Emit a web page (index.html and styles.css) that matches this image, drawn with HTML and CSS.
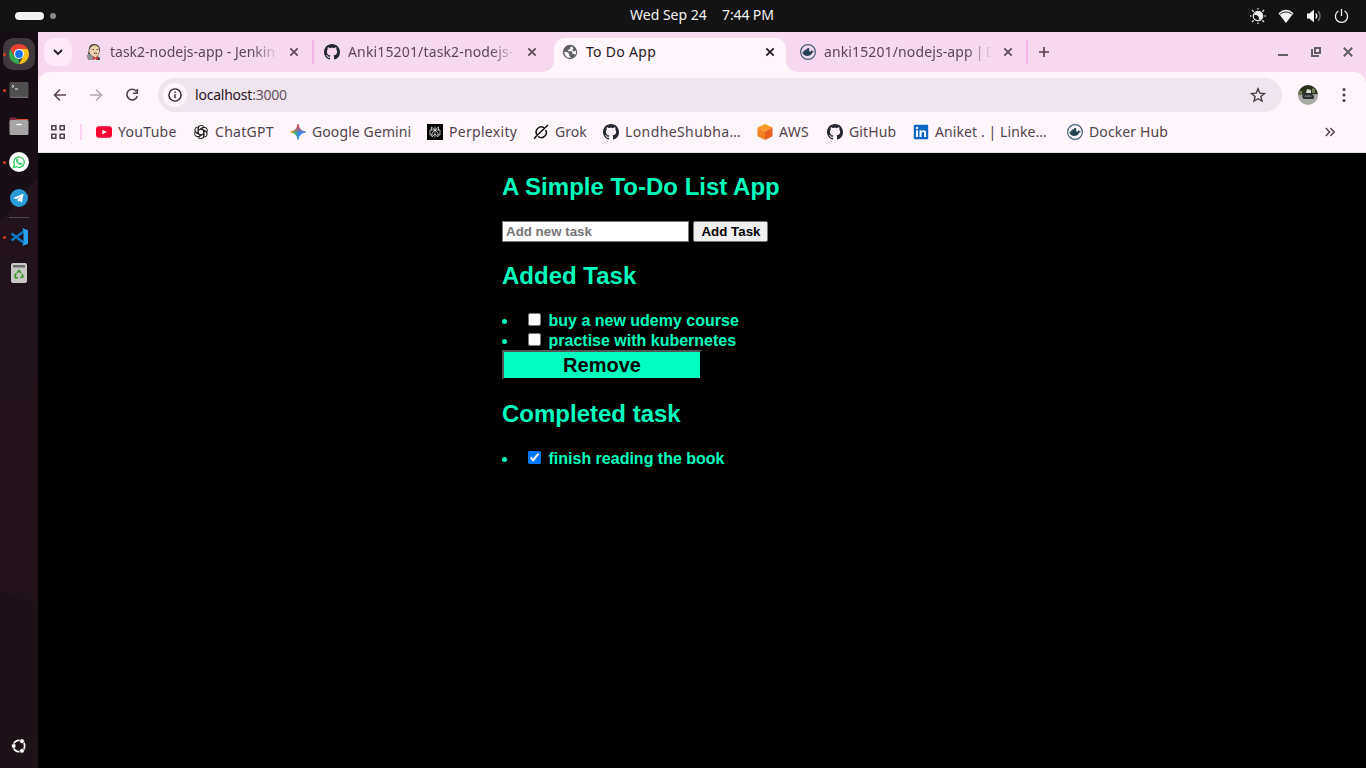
FILE: index.html
```html
<!DOCTYPE html>
<html lang="en">
<head>
<meta charset="utf-8">
<title>To Do App</title>
<link rel="stylesheet" href="styles.css">
</head>
<body>
<svg class="defs" width="0" height="0">
  <symbol id="github" viewBox="0 0 16 16"><path fill="#24292f" d="M8 0C3.58 0 0 3.58 0 8c0 3.54 2.29 6.53 5.47 7.59.4.07.55-.17.55-.38 0-.19-.01-.82-.01-1.49-2.01.37-2.53-.49-2.69-.94-.09-.23-.48-.94-.82-1.13-.28-.15-.68-.52-.01-.53.63-.01 1.08.58 1.23.82.72 1.21 1.87.87 2.33.66.07-.52.28-.87.51-1.07-1.78-.2-3.64-.89-3.64-3.95 0-.87.31-1.59.82-2.15-.08-.2-.36-1.02.08-2.12 0 0 .67-.21 2.2.82.64-.18 1.32-.27 2-.27s1.36.09 2 .27c1.53-1.04 2.2-.82 2.2-.82.44 1.1.16 1.92.08 2.12.51.56.82 1.27.82 2.15 0 3.07-1.87 3.75-3.65 3.95.29.25.54.73.54 1.48 0 1.07-.01 1.93-.01 2.2 0 .21.15.46.55.38A8.01 8.01 0 0 0 16 8c0-4.42-3.58-8-8-8z"/></symbol>
  <symbol id="docker" viewBox="0 0 16 16"><circle cx="8" cy="8" r="7.4" fill="none" stroke="#466174" stroke-width="1.2"/><path fill="#244356" d="M2.400 7.800h1.400V6.400h1.500V5.200h2V4.100h1.900v3.500h1.600c.5-.3.300-1 .8-1.500.6.3.8.800.8 1.200.6-.1 1 0 1.400.3-.3.700-.9.900-1.600 1.100-.9 2.200-2.700 3.200-5.300 3.200-2.700 0-4.300-1.300-4.500-4.100z"/></symbol>
  <symbol id="close" viewBox="0 0 10 10"><path d="M1.300 1.300l7.400 7.400M8.700 1.300l-7.400 7.400" fill="none" stroke="currentColor" stroke-width="1.700"/></symbol>
</svg>

<header class="topbar">
  <div class="workspaces"><i class="pill"></i><i class="dot"></i></div>
  <div class="clock"><span class="date">Wed Sep 24</span><span class="time">7:44 PM</span></div>
  <div class="status">
    <svg width="16" height="16" viewBox="0 0 16 16"><circle cx="8" cy="8" r="4.700" fill="none" stroke="#e8e8e8" stroke-width="1.200"/><path fill="#f2f2f2" d="M7.200 4.200A3.600 3.600 0 0 0 11.800 8.800 4.200 4.200 0 1 1 7.200 4.200z" transform="rotate(180 8 8)"/><g fill="#999"><path d="M7 0h2v1.600H7zM7 14.400h2V16H7zM0 7h1.600v2H0zM14.400 7H16v2h-1.600z"/></g><path d="M2 2l1.700 1.700M14 2l-1.700 1.700M2 14l1.700-1.700M14 14l-1.700-1.700" stroke="#ddd" stroke-width="1.300"/></svg>
    <svg width="16" height="16" viewBox="0 0 16 16"><path fill="#f5f5f5" d="M8 15L.5 5.200Q8-1.600 15.500 5.200z"/><path d="M2.200 6.100Q8 1.700 13.800 6.100" fill="none" stroke="#131313" stroke-width=".9"/></svg>
    <svg width="16" height="16" viewBox="0 0 16 16"><path fill="#f5f5f5" d="M1 5.500h2.300L8 1.500v13l-4.700-4H1z"/><path d="M9.700 5.500q2.200 2.500 0 5" fill="none" stroke="#eee" stroke-width="1.300"/><path d="M12.200 3q3.800 5 0 10" fill="none" stroke="#777" stroke-width="1.300"/></svg>
    <svg width="16" height="16" viewBox="0 0 16 16"><path d="M4.500 3A6.100 6.100 0 1 0 10.500 3M7.500 1v7" fill="none" stroke="#f2f2f2" stroke-width="1.300"/></svg>
  </div>
</header>

<div class="desktop">
<nav class="dock">
  <svg class="wall" width="38" height="736" viewBox="0 0 38 736"><path fill="#24141d" d="M0 190L38 145v427L0 560z"/></svg>
  <div class="app current running"><svg width="20" height="20" viewBox="0 0 20 20"><path fill="#34a853" d="M1.340 5l4.330 7.500L10 15v5A10 10 0 0 1 1.340 5z"/><path fill="#fbc116" d="M10 5h8.660A10 10 0 0 1 10 20l4.300-7.500z"/><path fill="#ea4335" d="M1.340 5A10 10 0 0 1 18.660 5H10l-4.330 7.500z"/><circle cx="10" cy="10" r="5" fill="#fff"/><circle cx="10" cy="10" r="3.900" fill="#1a73e8"/></svg></div>
  <div class="app running"><svg width="20" height="18" viewBox="0 0 20 18"><rect x=".5" y="1" width="19" height="16" rx="1.500" fill="#4e4e4e"/><path d="M1 16.300h18" stroke="#777"/><path d="M3 4l2 1.300L3 6.600M6 8h3" fill="none" stroke="#eee"/></svg></div>
  <div class="app"><svg width="20" height="18" viewBox="0 0 20 18"><path fill="#7d2942" d="M.5 2.500Q.5.500 2 .5h5l1.500 1.500H19v6H.5z"/><path fill="#d8542e" d="M8 2h11v1.500H7z"/><rect x=".5" y="3" width="19" height="15" rx="1.500" fill="#a6a4a4"/><path d="M7.500 7.500h5" stroke="#fff" stroke-width="1.300"/></svg></div>
  <div class="app running"><svg width="20" height="20" viewBox="0 0 20 20"><circle cx="10" cy="10" r="10" fill="#fff"/><path d="M4.500 15.500l.9-3A5.200 5.200 0 1 1 7.500 14.700z" fill="none" stroke="#2fca5d" stroke-width="1.300"/><path fill="#2fca5d" d="M7.600 6.800l.9-.1.800 1.800-.6.900q.7 1.400 2 1.900l.9-.8 1.700.9q-.2 1.500-1.800 1.500-3.700-.8-4.500-4.200-.1-1.200.6-1.900z"/></svg></div>
  <div class="app"><svg width="18" height="18" viewBox="0 0 18 18"><circle cx="9" cy="9" r="9" fill="#2a9bd6"/><path fill="#fff" d="M3.200 9L13.500 4.800 12 13.500 9.300 11.700 7.800 13 7.500 10.500 11.500 7 6.500 10z"/></svg></div>
  <hr class="rule">
  <div class="app running"><svg width="18" height="18" viewBox="0 0 18 18"><path d="M13.500 3.500L1.500 12.500M1.500 5.500l12 9" fill="none" stroke="#1377bd" stroke-width="2.600"/><path fill="#27a0ed" d="M12.500 0L18 2.300v13.400L12.500 18l1-4V4z"/></svg></div>
  <div class="app"><svg width="16" height="20" viewBox="0 0 16 20"><rect width="16" height="20" rx="2" fill="#c8c8c6"/><path fill="#6e6e6d" d="M2 2h12v2.500H2z"/><path d="M6 10l2-2.500 2 2.500M11 11l1 2.500-2.500 1.300M7 15H4.500L4 12.500l1.300-2" fill="none" stroke="#3b9a27" stroke-width="1.700"/></svg></div>
  <div class="launcher"><svg width="16" height="16" viewBox="0 0 16 16"><circle cx="8" cy="8" r="5.700" fill="none" stroke="#fff" stroke-width="1.800"/><g fill="#fff" stroke="#201419" stroke-width=".7"><circle cx="2.700" cy="8" r="2.400"/><circle cx="11" cy="3.200" r="2.400"/><circle cx="11" cy="12.800" r="2.400"/></g></svg></div>
</nav>

<main class="browser">
  <div class="tabs">
    <div class="search"><svg width="10" height="10" viewBox="0 0 10 10"><path d="M1 3l4 4 4-4" fill="none" stroke="#28171f" stroke-width="1.800"/></svg></div>
    <div class="tab t1">
      <svg class="fav" width="16" height="16" viewBox="0 0 16 16"><path fill="#4b3f39" d="M3 4.500Q3 0 8.500 0 14 .5 14 6l-1 4.500L11 13H5L2 10z"/><path fill="#edd0ae" d="M4.500 3.500Q8-.5 12.500 3l.7 4-.9 4-2.800 2.500L6 12 4 9.500 3 7z"/><path fill="#8b9398" d="M.5 11.500L3 9.500l4 3.500 1 3H2z"/><path fill="#343a42" d="M11 12.500l2.500.5.500 3h-4z"/><path fill="#d33833" d="M7 12.500l2.500 1 2.500-1V16L9.500 15 7 16z"/><path d="M6.500 5.500H8M10.500 5.500H12M8 9.500q1.500-1 3 0" stroke="#433" stroke-width=".9" fill="none"/></svg>
      <span class="title fade">task2-nodejs-app - Jenkin</span><svg class="x" width="10" height="10"><use href="#close"/></svg>
    </div>
    <div class="tab t2"><svg class="fav" width="16" height="16"><use href="#github"/></svg><span class="title fade wide">Anki15201/task2-nodejs-</span><svg class="x" width="10" height="10"><use href="#close"/></svg></div>
    <div class="tab active"><svg class="fav" width="16" height="16" viewBox="0 0 16 16"><circle cx="8" cy="8" r="7.200" fill="#5f6368"/><path fill="#fff6fb" d="M9.500 2.400L8.200 3.500v1.300L6 5.900v1.400h3.500l1 1v1.800h1.800l1 .8q1.200-2.300.4-4.400L12 7.500 10.200 6.300 11.600 4zM2.200 7.700l3.400.6 1.600 1.600v1.700L9 13.700Q3 14.700 2.200 7.700z"/></svg><span class="title c">To Do App</span><svg class="x" width="10" height="10"><use href="#close"/></svg></div>
    <div class="tab t4"><svg class="fav" width="16" height="16"><use href="#docker"/></svg><span class="title fade tail">anki15201/nodejs-app<span class="suffix"> | D</span></span><svg class="x" width="10" height="10"><use href="#close"/></svg></div>
    <svg class="plus" width="12" height="12" viewBox="0 0 12 12"><path d="M6 1v10M1 6h10" stroke="#51404c" stroke-width="1.600"/></svg>
    <div class="window">
      <svg width="10" height="10" viewBox="0 0 10 10"><path d="M0 7h10v2H0z" fill="#625f65"/></svg>
      <svg width="10" height="10" viewBox="0 0 10 10"><path d="M4 1h5v5H4zM1 2v7h7" fill="none" stroke="#625f65" stroke-width="2"/></svg>
      <svg width="10" height="10" viewBox="0 0 10 10"><path d="M.8.8l8.400 8.400M9.200.8L.8 9.200" stroke="#625f65" stroke-width="2"/></svg>
    </div>
  </div>

  <div class="chrome">
    <div class="toolbar">
      <svg width="16" height="16" viewBox="0 0 16 16"><path d="M14 8H3M8 2.500L2.500 8 8 13.500" fill="none" stroke="#55404f" stroke-width="1.500"/></svg>
      <svg width="16" height="16" viewBox="0 0 16 16"><path d="M2 8h11M8 2.500L13.500 8 8 13.500" fill="none" stroke="#b5a8b0" stroke-width="1.500"/></svg>
      <svg width="16" height="16" viewBox="0 0 16 16"><path d="M12.500 4.500A5.300 5.300 0 1 0 13.300 9M13.300 2v4.200H9" fill="none" stroke="#55404f" stroke-width="1.600"/></svg>
      <div class="omnibox">
        <span class="info"><svg width="14" height="14" viewBox="0 0 14 14"><circle cx="7" cy="7" r="6.100" fill="none" stroke="#2b2228" stroke-width="1.400"/><path d="M7 6.200v4M7 3.500v1.400" stroke="#2b2228" stroke-width="1.400"/></svg></span>
        <span class="url">localhost<span class="port">:3000</span></span>
        <svg class="star" width="16" height="16" viewBox="0 0 16 16"><path d="M8 1.800l1.800 4.300 4.700.4-3.600 3 1.100 4.600L8 11.700 4 14.100l1.100-4.600-3.600-3 4.700-.4z" fill="none" stroke="#493d47" stroke-width="1.400"/></svg>
      </div>
      <svg class="avatar" width="20" height="20" viewBox="0 0 20 20"><defs><clipPath id="round"><circle cx="10" cy="10" r="10"/></clipPath></defs><g clip-path="url(#round)"><path fill="#29331c" d="M0 0h20v10H0z"/><path fill="#a9aba5" d="M0 10l20-1v11H0z"/><path fill="#6d7a58" d="M0 5l4 1v4H0zM14 3l3 1v4h-3z"/><path fill="#d9ddd0" d="M9 4l4 1v3H8z"/><path fill="#2a2c2f" d="M4 11l3-3h6l3 3-.5 3h-10z"/><path fill="#85898b" d="M6.500 10.500h7v1.200h-7z"/></g></svg>
      <svg class="menu" width="4" height="16" viewBox="0 0 4 16"><g fill="#55404f"><circle cx="2" cy="2.500" r="1.600"/><circle cx="2" cy="8" r="1.600"/><circle cx="2" cy="13.500" r="1.600"/></g></svg>
    </div>

    <div class="bookmarks">
      <svg width="14" height="14" viewBox="0 0 14 14"><path d="M.8.8h4v4h-4zM9.200.8h4v4h-4zM.8 9.200h4v4h-4zM9.200 9.200h4v4h-4z" fill="none" stroke="#55404f" stroke-width="1.600"/></svg>
      <i class="sep"></i>
      <div class="links">
        <a><svg width="16" height="16" viewBox="0 0 16 16"><rect y="2.300" width="16" height="11.500" rx="3" fill="#ff0033"/><path fill="#fff" d="M6.300 5.700v4.700L10.600 8z"/></svg><span class="wider">YouTube</span></a>
        <a><svg width="14" height="14" viewBox="1 1 14 14" class="gpt"><g fill="none" stroke="#242424" stroke-width="1.050"><path id="petal" d="M5.200 9.600V4.500A3 3 0 0 1 10.700 2.700M5.200 6.400l4.400-2.600a3 3 0 0 1 2.500-.2"/><use href="#petal" transform="rotate(60 8 8)"/><use href="#petal" transform="rotate(120 8 8)"/><use href="#petal" transform="rotate(180 8 8)"/><use href="#petal" transform="rotate(240 8 8)"/><use href="#petal" transform="rotate(300 8 8)"/></g></svg><span class="wider">ChatGPT</span></a>
        <a><svg width="16" height="16" viewBox="0 0 16 16"><defs><linearGradient id="gem" x1="0" x2="1"><stop stop-color="#f5bd13"/><stop offset=".3" stop-color="#45ae70"/><stop offset=".6" stop-color="#3586ff"/><stop offset="1" stop-color="#3586ff"/></linearGradient><linearGradient id="gemTop" x1="0" y1="0" x2="0" y2="1"><stop stop-color="#f04b42"/><stop offset=".4" stop-color="#f04b42" stop-opacity=".4"/><stop offset=".55" stop-color="#f04b42" stop-opacity="0"/></linearGradient></defs><path fill="url(#gem)" d="M8 .5Q9 7 15.500 8 9 9 8 15.500 7 9 .5 8 7 7 8 .5z" stroke="url(#gem)"/><path fill="url(#gemTop)" stroke="url(#gemTop)" d="M8 .5Q9 7 15.500 8 9 9 8 15.500 7 9 .5 8 7 7 8 .5z"/></svg><span class="slight">Google Gemini</span></a>
        <a><svg width="16" height="16" viewBox="0 0 16 16"><path d="M0 0h16v16H0z"/><path d="M8 2.500v11M8 6L4.500 3v3H3v5h2V9l3-3 3 3v2h2V6h-1.500V3L8 6zM5 10v3l3-3 3 3v-3M3.500 6h9" fill="none" stroke="#ddd" stroke-width=".8"/></svg><span class="wider">Perplexity</span></a>
        <a><svg width="16" height="16" viewBox="0 0 16 16"><path d="M11.200 4A5 5 0 0 0 4.200 11M5 12.300A5 5 0 0 0 12.600 6M1.200 14.800Q3 12 6 9.500L15 1" fill="none" stroke="#111" stroke-width="1.500"/></svg><span>Grok</span></a>
        <a><svg width="16" height="16"><use href="#github"/></svg><span class="widest">LondheShubha…</span></a>
        <a><svg width="16" height="16" viewBox="0 0 16 16"><path fill="#ff9b28" d="M8 0l7.500 3.500L8 7.500.5 3.500z"/><path fill="#f58323" d="M.5 3.500l7.500 4V16L.5 12.200z"/><path fill="#e96020" d="M15.500 3.500L8 7.500V16l7.500-3.800z"/></svg><span class="wider">AWS</span></a>
        <a><svg width="16" height="16"><use href="#github"/></svg><span class="slight">GitHub</span></a>
        <a><svg width="16" height="16" viewBox="0 0 16 16"><rect x=".8" y=".8" width="14.400" height="14.400" rx="1" fill="#0a66c2"/><path fill="#fff" d="M3 6.300h2V13H3zM6.500 6.300h1.900v1q2-2.200 4.300-.2.400.6.400 1.700V13h-2V9.300q0-1.500-1.200-1.500T8.500 9.300V13h-2z"/><circle cx="4" cy="4" r="1.200" fill="#fff"/></svg><span class="slight">Aniket . | Linke…</span></a>
        <a><svg width="16" height="16"><use href="#docker"/></svg><span class="slight">Docker Hub</span></a>
      </div>
      <svg class="more" width="10" height="10" viewBox="0 0 10 10"><path d="M.8 1L4.600 5 .8 9M5.400 1l3.800 4-3.800 4" fill="none" stroke="#55404f" stroke-width="1.500"/></svg>
    </div>
  </div>

  <section class="page">
    <h2>A Simple To-Do List App</h2>
    <form class="add"><input class="new" type="text" placeholder="Add new task"> <button class="submit" type="button">Add Task</button></form>
    <h2>Added Task</h2>
    <ul class="list"><li><input type="checkbox">buy a new udemy course</li><li><input type="checkbox">practise with kubernetes</li></ul>
    <button class="remove">Remove</button>
    <h2>Completed task</h2>
    <ul class="list"><li><input type="checkbox" checked>finish reading the book</li></ul>
  </section>
</main>
</div>
</body>
</html>
```
FILE: styles.css
```css
* { box-sizing: border-box; }
body { margin: 0; width: 1366px; height: 768px; overflow: hidden; background: #000; font: 14px/20px "Noto Sans", "Open Sans", sans-serif; display: flex; flex-direction: column; }
svg { display: block; flex: none; }
.defs { position: absolute; }

.topbar { height: 32px; flex: none; background: #131313; color: #f2f2f2; display: grid; grid-template-columns: 630px 1fr auto; align-items: center; padding-right: 16px; }
.workspaces { display: flex; align-items: center; gap: 6px; padding-left: 15px; }
.pill { width: 29px; height: 8px; border-radius: 4px; background: #f2f2f2; }
.dot { width: 6px; height: 6px; border-radius: 50%; background: #888; }
.clock { display: flex; gap: 15px; line-height: 20px; padding-bottom: 2px; }
.date { width: 77px; white-space: nowrap; }
.time { white-space: nowrap; letter-spacing: -.12px; }
.status { display: flex; gap: 12px; }

.desktop { display: flex; flex: 1; min-height: 0; }
.dock { width: 38px; flex: none; display: flex; flex-direction: column; align-items: center; padding-top: 4px; position: relative; background: linear-gradient(#160c13, #1c1118 50%, #1d1217); }
.wall { position: absolute; inset: 0; opacity: .75; }
.app { position: relative; width: 32px; height: 36px; flex: none; display: flex; align-items: center; justify-content: center; }
.current::after { content: ""; position: absolute; inset: 2px 0; border-radius: 10px; background: #403a3f; }
.current svg { position: relative; z-index: 1; }
.running::before { content: ""; position: absolute; z-index: 2; left: 0; top: 17px; width: 3px; height: 3px; border-radius: 50%; background: #d2431b; }
.rule { position: relative; width: 20px; height: 1px; border: 0; margin: 1px 0; background: #514850; flex: none; }
.launcher { margin-top: auto; padding-bottom: 14px; position: relative; }

.browser { flex: 1; min-width: 0; display: flex; flex-direction: column; background: #f7d9ef; }
.tabs { height: 40px; flex: none; display: flex; align-items: center; padding-left: 6px; color: #5b4856; }
.search { width: 28px; height: 28px; border-radius: 10px; background: #feeaf8; display: grid; place-items: center; }
.tab { height: 24px; display: flex; align-items: center; position: relative; flex: none; }
.t1 { width: 242px; padding-left: 14px; border-right: 2px solid #f2b4e7; margin-right: 1px; }
.t2 { width: 239px; padding-left: 9px; }
.active { width: 232px; height: 34px; align-self: flex-end; padding: 0 11px 6px 8px; border-radius: 11px 11px 0 0; background: #fff6fb; color: #28171f; }
.active::before, .active::after { content: ""; position: absolute; bottom: 0; width: 11px; height: 11px; }
.active::before { left: -11px; background: radial-gradient(circle at 0 0, transparent 10.500px, #fff6fb 11px); }
.active::after { right: -11px; background: radial-gradient(circle at 100% 0, transparent 10.500px, #fff6fb 11px); }
.t4 { width: 242px; padding-left: 14px; border-right: 2px solid #f2b4e7; }
.title { margin-left: 8px; width: 168px; overflow: hidden; white-space: nowrap; line-height: 20px; }
.fade { -webkit-mask-image: linear-gradient(90deg, #000 142px, transparent 169px); mask-image: linear-gradient(90deg, #000 142px, transparent 169px); }
.tail { letter-spacing: .12px; }
.suffix { letter-spacing: -.7px; }
.c { letter-spacing: .3px; }
.x { margin-left: 11px; }
.plus { margin-left: 10px; }
.window { display: flex; gap: 22px; margin-left: auto; padding-right: 13px; }
.window svg:first-child { margin-right: 1px; }

.slight { letter-spacing: .1px; }
.wide { letter-spacing: .15px; }
.wider { letter-spacing: .3px; }
.widest { letter-spacing: .4px; }

.chrome { height: 81px; flex: none; background: #fff6fb; border-radius: 12px 12px 0 0; border-bottom: 1px solid #e6dce2; }
.toolbar { height: 45px; display: flex; align-items: center; padding-left: 14px; gap: 20px; }
.omnibox { width: 1124px; height: 34px; margin-left: -2px; border-radius: 17px; background: #efe5ee; display: flex; align-items: center; padding: 0 16px 0 5px; }
.info { width: 24px; height: 24px; border-radius: 50%; background: #fff6fb; display: grid; place-items: center; }
.url { margin-left: 8px; color: #28171f; letter-spacing: -.22px; line-height: 20px; }
.port { color: #66535f; }
.star { margin-left: auto; }
.avatar { margin-left: -4px; }
.menu { margin-left: 4px; }
.bookmarks { height: 30px; display: flex; align-items: center; padding-left: 13px; }
.sep { width: 2px; height: 16px; margin-left: 15px; background: #fbd3f2; }
.links { margin-left: 14px; display: grid; grid-template-columns: 97px 97px 137px 106px 70px 154px 70px 86px 154px 103px; }
.links a { display: flex; align-items: center; gap: 6px; color: #51434d; white-space: nowrap; line-height: 20px; }
.gpt { margin: 0 1px; }
.more { margin-left: auto; margin-right: 31px; }

.page { flex: 1; background: #000; color: #00ffbf; padding-left: 464px; font: bold 16px "Liberation Sans", Arial, sans-serif; display: flow-root; }
.page h2 { font-size: 24px; line-height: 27px; margin: 20px 0; }
.page button, .new { font: bold 13.333px "Liberation Sans", Arial, sans-serif; }
.add { display: flex; gap: 4px; height: 22px; padding-top: 1px; margin: 0; }
.new { width: 187px; height: 21px; padding: 1px 3px; border: 1px solid #767676; }
.submit { width: 75px; height: 21px; padding: 1px 6px 1px 7px; border: 1px solid #767676; border-radius: 2px; background: #efefef; color: #000; }
.list { list-style: inside disc; margin: 0; padding: 1px 0 0; }
.list li { height: 20px; line-height: 20px; }
.list input { width: 13px; height: 13px; margin: 3px 7.500px 3px 4px; }
.page .remove { display: block; width: 200px; height: 30px; padding: 0; border: 2px outset #000; background: #00ffbf; color: #000; font-size: 20px; }
```
